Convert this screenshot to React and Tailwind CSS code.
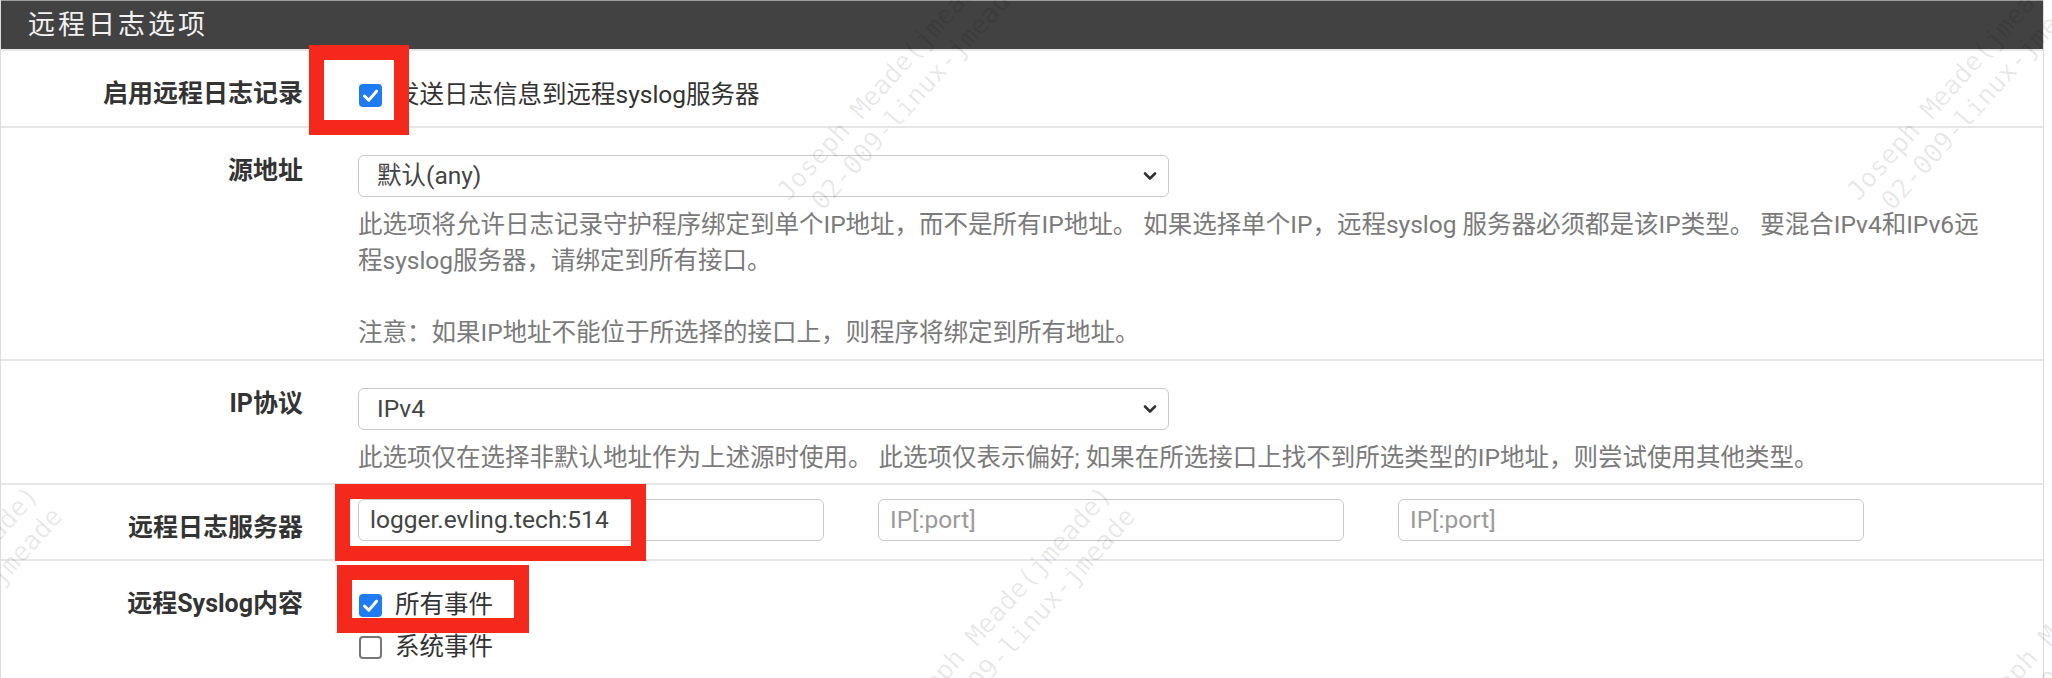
import React from 'react';

const Check = ({ checked }) =>
  checked ? (
    <span className="flex h-[23px] w-[23px] shrink-0 items-center justify-center rounded-[4px] bg-[#1f7bf2]">
      <svg viewBox="0 0 23 23" className="h-[23px] w-[23px]">
        <path d="M5.5 12 L9.8 16.2 L17.5 7.2" fill="none" stroke="#fff" strokeWidth="3" strokeLinecap="round" strokeLinejoin="round" />
      </svg>
    </span>
  ) : (
    <span className="h-[23px] w-[23px] shrink-0 rounded-[4px] border-2 border-[#767676] bg-white" />
  );

const Chevron = () => (
  <svg viewBox="0 0 14 10" className="h-[10px] w-[14px]">
    <path d="M2 2.5 L7 7.5 L12 2.5" fill="none" stroke="#333" strokeWidth="2.6" strokeLinecap="round" strokeLinejoin="round" />
  </svg>
);

const Row = ({ label, children, className = '' }) => (
  <div className="flex border-t-2 border-[#e6e6e6]">
    <div className="w-[302px] shrink-0 pt-[25px] text-right text-[25px] font-bold leading-[36px] text-[#333]">
      {label}
    </div>
    <div className={`ml-[55px] flex-1 ${className}`}>{children}</div>
  </div>
);

const Select = ({ value }) => (
  <div className="flex h-[42px] w-[811px] items-center justify-between rounded-[6px] border border-[#c9c9c9] bg-white pl-[18px] pr-[11px] text-[24.5px] text-[#444]">
    <span>{value}</span>
    <Chevron />
  </div>
);

const Input = ({ value, placeholder }) => (
  <div className="flex h-[42px] w-[466px] items-center rounded-[6px] border border-[#c9c9c9] bg-white px-[11px] text-[24.5px]">
    {value ? <span className="text-[#444]">{value}</span> : <span className="text-[#9a9a9a]">{placeholder}</span>}
  </div>
);

const Watermark = ({ className }) => (
  <div
    className={`pointer-events-none absolute origin-top-left -rotate-[48deg] whitespace-pre font-['DejaVu_Sans_Mono',monospace] text-[26px] leading-[32px] text-black/[0.09] ${className}`}
  >
    {'Joseph Meade(jmeade)\n 02-009-linux-jmeade'}
  </div>
);

export default function App() {
  return (
    <div className="relative h-[678px] w-[2052px] overflow-hidden bg-white font-[Roboto,'Noto_Sans_CJK_SC',sans-serif]">
      <div className="w-[2044px] border-x border-[#dcdcdc]">
        {/* panel heading */}
        <div className="flex h-[49px] items-center border-t border-[#9e9e9e] bg-[#424242] pl-[27px] text-[27px] tracking-[3px] text-[#f2f2f2]">
          远程日志选项
        </div>

        <Row label="启用远程日志记录" className="pt-[23px] pb-[10px]">
          <div className="flex h-[42px] items-center gap-[13px] pl-[1px] text-[24.5px] text-[#333]">
            <Check checked />
            <span>发送日志信息到远程syslog服务器</span>
          </div>
        </Row>

        <Row label="源地址" className="pt-[27px] pb-[8px]">
          <Select value="默认(any)" />
          <div className="mt-[10px] whitespace-nowrap text-[24.5px] leading-[36px] text-[#7a7a7a]">
            此选项将允许日志记录守护程序绑定到单个IP地址，而不是所有IP地址。 如果选择单个IP，远程syslog 服务器必须都是该IP类型。 要混合IPv4和IPv6远
            <br />
            程syslog服务器，请绑定到所有接口。
            <br />
            <br />
            注意：如果IP地址不能位于所选择的接口上，则程序将绑定到所有地址。
          </div>
        </Row>

        <Row label="IP协议" className="pt-[27px] pb-[7px]">
          <Select value="IPv4" />
          <div className="mt-[10px] whitespace-nowrap text-[24.5px] leading-[36px] text-[#7a7a7a]">
            此选项仅在选择非默认地址作为上述源时使用。 此选项仅表示偏好; 如果在所选接口上找不到所选类型的IP地址，则尝试使用其他类型。
          </div>
        </Row>

        <Row label="远程日志服务器" className="pt-[14px] pb-[18px]">
          <div className="flex gap-[54px]">
            <Input value="logger.evling.tech:514" />
            <Input placeholder="IP[:port]" />
            <Input placeholder="IP[:port]" />
          </div>
        </Row>

        <Row label="远程Syslog内容" className="pt-[23px] pb-[10px]">
          <div className="flex h-[42px] items-center gap-[13px] pl-[1px] text-[24.5px] text-[#333]">
            <Check checked />
            <span>所有事件</span>
          </div>
          <div className="flex h-[42px] items-center gap-[13px] pl-[1px] text-[24.5px] text-[#333]">
            <Check />
            <span>系统事件</span>
          </div>
        </Row>
      </div>

      {/* watermark */}
      <Watermark className="left-[770px] top-[185px]" />
      <Watermark className="left-[1840px] top-[185px]" />
      <Watermark className="left-[885px] top-[712px]" />
      <Watermark className="left-[1958px] top-[712px]" />
      <Watermark className="left-[-188px] top-[712px]" />

      {/* red annotation boxes */}
      <div className="pointer-events-none absolute left-[309px] top-[45px] h-[90px] w-[100px] border-[15px] border-[#f4291b]" />
      <div className="pointer-events-none absolute left-[335px] top-[484px] h-[77px] w-[311px] border-[15px] border-[#f4291b]" />
      <div className="pointer-events-none absolute left-[337px] top-[565px] h-[68px] w-[192px] border-[15px] border-[#f4291b]" />
    </div>
  );
}
